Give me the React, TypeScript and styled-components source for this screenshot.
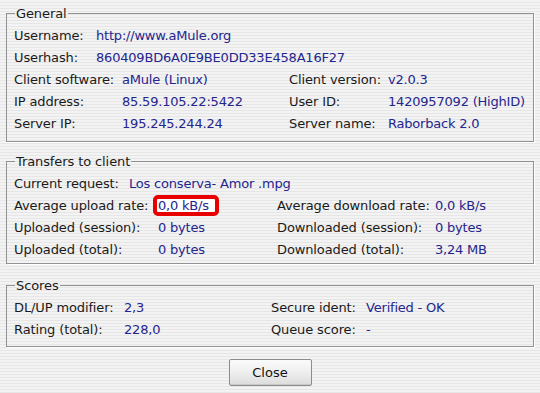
import React from "react";
import styled, { createGlobalStyle } from "styled-components";

const GlobalStyle = createGlobalStyle`
  html, body {
    margin: 0;
    padding: 0;
  }
  body {
    font-family: "DejaVu Sans", "Liberation Sans", sans-serif;
    font-size: 13px;
    color: #1a1a1a;
    background: repeating-linear-gradient(
      to bottom,
      #f3f3f3 0px,
      #f3f3f3 2px,
      #e6e6e6 2px,
      #e6e6e6 3px
    );
  }
`;

const Dialog = styled.div`
  width: 540px;
  height: 393px;
  box-sizing: border-box;
  padding: 6px 6px 0 6px;
  display: flex;
  flex-direction: column;
`;

const Frame = styled.fieldset<{ $mt: number; $pb: number }>`
  margin: ${(p) => p.$mt}px 0 0 0;
  padding: 3px 6px ${(p) => p.$pb}px 7px;
  border: 1px solid #929292;
  box-shadow: 1px 1px 0 #ffffff;
  min-width: 0;
`;

const Legend = styled.legend`
  margin-left: 1px;
  padding: 0 1px;
  line-height: 15px;
  font-size: 13px;
  letter-spacing: -0.1px;
  color: #1a1a1a;
`;

const Grid = styled.div<{ $cols: string }>`
  display: grid;
  grid-template-columns: ${(p) => p.$cols};
  grid-auto-rows: 22px;
  align-items: center;
`;

const Label = styled.span`
  line-height: 15px;
  white-space: nowrap;
  letter-spacing: -0.12px;
  color: #1a1a1a;
`;

const Value = styled.span`
  line-height: 15px;
  white-space: nowrap;
  color: #25258e;
  letter-spacing: -0.2px;
  display: flex;
  align-items: center;
`;

const Marked = styled.span`
  display: inline-block;
  line-height: 13px;
  border: 4px solid #e80000;
  border-radius: 5px;
  background: #ffffff;
  padding: 0 6px 0 1px;
  margin: 0 -10px 0 -5px;
`;

const Footer = styled.div`
  display: flex;
  justify-content: center;
  margin-top: 12px;
`;

const Button = styled.button`
  width: 83px;
  height: 27px;
  font-family: "DejaVu Sans", "Liberation Sans", sans-serif;
  font-size: 13px;
  color: #111;
  border: 1px solid #8c8c8c;
  border-radius: 2px;
  background: linear-gradient(to bottom, #fbfbfb 0%, #eeeeee 50%, #dcdcdc 100%);
  box-shadow: inset 0 -1px 0 #c8c8c8;
  padding: 0;
`;

type Row = [string, React.ReactNode, string?, React.ReactNode?];

const Rows: React.FC<{ rows: Row[] }> = ({ rows }) => (
  <>
    {rows.map(([l1, v1, l2, v2], i) => (
      <React.Fragment key={i}>
        <Label>{l1}</Label>
        <Value>{v1}</Value>
        {l2 !== undefined && <Label>{l2}</Label>}
        {l2 !== undefined && <Value>{v2}</Value>}
      </React.Fragment>
    ))}
  </>
);

export default function App() {
  return (
    <>
      <GlobalStyle />
      <Dialog>
        <Frame $mt={0} $pb={7}>
          <Legend>General</Legend>
          <Grid $cols="82px 1fr">
            <Rows
              rows={[
                ["Username:", "http://www.aMule.org"],
                ["Userhash:", "860409BD6A0E9BE0DD33E458A16F27"],
              ]}
            />
          </Grid>
          <Grid $cols="108px 167px 99px 1fr">
            <Rows
              rows={[
                ["Client software:", "aMule (Linux)", "Client version:", "v2.0.3"],
                ["IP address:", "85.59.105.22:5422", "User ID:", "1420957092 (HighID)"],
                ["Server IP:", "195.245.244.24", "Server name:", "Raborback 2.0"],
              ]}
            />
          </Grid>
        </Frame>

        <Frame $mt={12} $pb={3}>
          <Legend>Transfers to client</Legend>
          <Grid $cols="115px 1fr">
            <Rows rows={[["Current request:", "Los conserva- Amor .mpg"]]} />
          </Grid>
          <Grid $cols="144px 119px 158px 1fr">
            <Rows
              rows={[
                [
                  "Average upload rate:",
                  <Marked>0,0 kB/s</Marked>,
                  "Average download rate:",
                  "0,0 kB/s",
                ],
                ["Uploaded (session):", "0 bytes", "Downloaded (session):", "0 bytes"],
                ["Uploaded (total):", "0 bytes", "Downloaded (total):", "3,24 MB"],
              ]}
            />
          </Grid>
        </Frame>

        <Frame $mt={14} $pb={6}>
          <Legend>Scores</Legend>
          <Grid $cols="110px 147px 95px 1fr">
            <Rows
              rows={[
                ["DL/UP modifier:", "2,3", "Secure ident:", "Verified - OK"],
                ["Rating (total):", "228,0", "Queue score:", "-"],
              ]}
            />
          </Grid>
        </Frame>

        <Footer>
          <Button>Close</Button>
        </Footer>
      </Dialog>
    </>
  );
}
